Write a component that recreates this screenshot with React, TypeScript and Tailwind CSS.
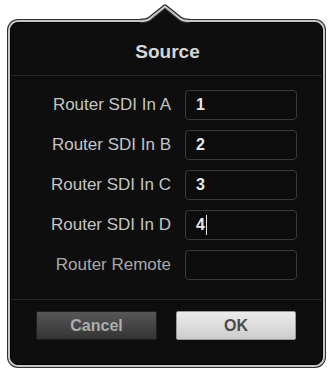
import React from 'react';

const rows = [
  { label: 'Router SDI In A', value: '1' },
  { label: 'Router SDI In B', value: '2' },
  { label: 'Router SDI In C', value: '3' },
  { label: 'Router SDI In D', value: '4', caret: true },
  { label: 'Router Remote', value: '' },
];

function Arrow() {
  return (
    <svg
      className="absolute left-[140px] top-0"
      width="50"
      height="28"
      viewBox="0 0 50 28"
    >
      <path d="M7,21 L25,6.5 L43,21 L43,28 L7,28 Z" fill="#0e0e0e" />
      <path
        d="M0,21 Q7,21 10,18.6 L25,6.5 L40,18.6 Q43,21 50,21"
        fill="none"
        stroke="#2e2e2e"
        strokeWidth="4.5"
        strokeLinejoin="round"
      />
      <path
        d="M0,21 Q7,21 10,18.6 L25,6.5 L40,18.6 Q43,21 50,21"
        fill="none"
        stroke="#c6c6c6"
        strokeWidth="2"
        strokeLinejoin="round"
      />
    </svg>
  );
}

export default function App() {
  return (
    <div
      className="relative w-[329px] h-[370px] bg-white pt-[19px] pl-[7px]"
      style={{ fontFamily: '"Liberation Sans", Arial, sans-serif' }}
    >
      <div className="w-[319px] h-[349px] rounded-[11px] bg-[#2e2e2e] p-px">
        <div className="h-full rounded-[10px] bg-[#c6c6c6] p-[2px]">
          <div className="h-full rounded-[8px] border border-black bg-[#0e0e0e] flex flex-col">
            <div className="h-[52px] flex items-center justify-center pt-[6px]">
              <span className="text-[19px] font-bold text-[#d6d6d6] pl-[2px]">Source</span>
            </div>
            <div className="h-px bg-[#262626]" />

            <div className="flex flex-col gap-[10px] pt-[14px]">
              {rows.map((r) => (
                <div key={r.label} className="flex items-center">
                  <div
                    className={
                      r.value
                        ? 'w-[160px] text-right text-[17px] text-[#c4c4c4]'
                        : 'w-[160px] text-right text-[17px] text-[#a8a8a8]'
                    }
                  >
                    {r.label}
                  </div>
                  <div className="ml-[14px] w-[112px] h-[30px] rounded-[4px] border border-[#3a3a3a] bg-[#0c0c0c] flex items-center pl-[10px]">
                    <span className="text-[16px] font-bold text-[#e6e6e6]">{r.value}</span>
                    {r.caret && <span className="ml-px w-px h-[20px] bg-[#e6e6e6]" />}
                  </div>
                </div>
              ))}
            </div>

            <div className="mt-[19px] h-px bg-[#262626]" />

            <div className="flex pt-[11px] pl-[25px] gap-[19px]">
              <button className="w-[121px] h-[29px] rounded-[2px] border border-[#1e1e1e] bg-gradient-to-b from-[#575757] to-[#343434] text-[16px] font-bold text-[#adadad]">
                Cancel
              </button>
              <button className="w-[120px] h-[29px] rounded-[2px] border border-[#9a9a9a] bg-gradient-to-b from-[#ececec] to-[#cdcdcd] text-[16px] font-bold text-[#4a4a4a]">
                OK
              </button>
            </div>
          </div>
        </div>
      </div>
      <Arrow />
    </div>
  );
}
